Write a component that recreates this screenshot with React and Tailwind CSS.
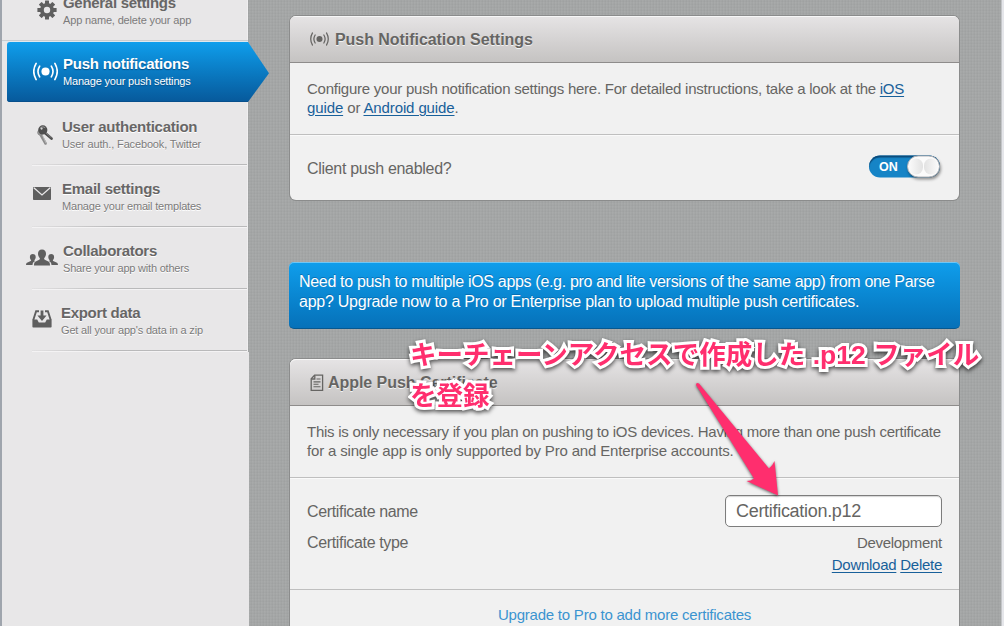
const SANS = "font-['Liberation_Sans',Arial,sans-serif]";

function Broadcast({ className, width, height }) {
  return (
    <svg className={className} width={width} height={height} viewBox="0 0 24 18" fill="none" stroke="currentColor" strokeWidth="1.6" strokeLinecap="round">
      <circle cx="12" cy="9" r="3.9" fill="currentColor" stroke="none" />
      <path d="M6.4 3.8C4.4 7 4.4 11 6.4 14.2M17.6 3.8c2 3.200 2 7.200 0 10.400M3 1.200C.2 6 .2 12 3 16.800M21 1.200c2.800 4.800 2.800 10.800 0 15.600" />
    </svg>
  );
}

function Gear() {
  return (
    <svg width="20" height="20" viewBox="-10 -10 20 20" fill="#5f5f5f">
      {[0, 45, 90, 135].map((a) => (
        <rect key={a} x="-2" y="-9.600" width="4" height="19.200" rx="0.500" transform={`rotate(${a})`} />
      ))}
      <circle r="7" />
      <circle r="3.200" fill="#e8e7e8" />
    </svg>
  );
}

function Keys() {
  return (
    <svg width="18" height="21" viewBox="0 0 18 21">
      <g stroke="#8b8b8b" strokeLinecap="round" fill="none">
        <path d="M3.500 9.500L8.600 18.500" strokeWidth="2.600" />
        <path d="M6 11.500l3 6.500" stroke="#bdbdbd" strokeWidth="0.900" />
        <circle cx="3.300" cy="7.500" r="2.600" fill="#9a9a9a" strokeWidth="1" />
      </g>
      <path d="M7.500 7.500l7 6" stroke="#4c4c4c" strokeWidth="2.700" strokeLinecap="round" />
      <path d="M8 7.200l6.500 5.600" stroke="#969696" strokeWidth="0.700" />
      <circle cx="5.800" cy="4.900" r="4.600" fill="#4f4f4f" />
      <path d="M3.200 3.200c1.200-1.600 3.600-1.800 5-.400" stroke="#aaa" strokeWidth="0.800" fill="none" />
      <circle cx="4.600" cy="3.600" r="1.100" fill="#d5d5d5" />
    </svg>
  );
}

function Mail() {
  return (
    <svg width="18" height="13" viewBox="0 0 18 13">
      <rect width="18" height="13" rx="0.800" fill="#5f5f5f" />
      <path d="M.8.800L9 7.900 17.200.800" fill="none" stroke="#e8e7e8" strokeWidth="1.300" />
    </svg>
  );
}

function People() {
  return (
    <svg width="32" height="17" viewBox="0 0 32 17" fill="#5f5f5f">
      <path d="M16 .5c2.700 0 4 1.800 4 4.200 0 2-.8 3.300-1.700 4.300-.4.800-.1 1.600 1 2.100l3 1.400c1.200.6 1.700 1.600 1.700 4H8c0-2.400.5-3.400 1.700-4l3-1.400c1.100-.5 1.400-1.300 1-2.100C12.800 8 12 6.700 12 4.700 12 2.300 13.300.5 16 .5z" />
      <path d="M6.800 5c1.900 0 2.900 1.200 2.900 3 0 1.400-.6 2.300-1.200 3-.3.600 0 1 .5 1.300-1.600.7-2.300 1.600-2.500 3.700H0c.1-1.700.6-2.200 1.600-2.600l2.600-1.100c.9-.4 1.100-.8.800-1.300-.6-.7-1.100-1.600-1.100-3C3.900 6.200 4.900 5 6.800 5z" />
      <path d="M25.200 5c-1.900 0-2.900 1.200-2.900 3 0 1.400.6 2.300 1.200 3 .3.600 0 1-.5 1.300 1.600.7 2.300 1.600 2.500 3.700H32c-.1-1.700-.6-2.200-1.600-2.600l-2.600-1.100c-.9-.4-1.100-.8-.8-1.300.6-.7 1.100-1.600 1.100-3 0-1.800-1-3-2.900-3z" />
    </svg>
  );
}

function Inbox() {
  return (
    <svg width="20" height="18" viewBox="0 0 20 18">
      <path d="M7 1.200H4.100L1.300 10M13 1.200h2.900L18.700 10" fill="none" stroke="#5f5f5f" strokeWidth="1.900" />
      <path d="M.4 9.600h4.800l1.600 2.800h6.400l1.600-2.800h4.800v7.200a.8.800 0 0 1-.8.800H1.200a.8.800 0 0 1-.8-.8z" fill="#5f5f5f" />
      <path d="M8.600.5h2.800v5h3.200L10 11 5.400 5.500h3.200z" fill="#5f5f5f" />
    </svg>
  );
}

function Doc() {
  return (
    <svg width="14" height="18" viewBox="0 0 14 18" fill="none" stroke="#666563" strokeWidth="1.300">
      <path d="M4.600 1.200H12.600V16.300H1.200V4.700z" />
      <path d="M4.800 1.500V5H1.400" />
      <path d="M6.500 5H10.500M3.500 7.900H10.500M3.500 10.300H8.500M3.500 12.700H10.500" strokeWidth="1.100" />
    </svg>
  );
}

function NavRow({ icon, iconClass, textClass, title, titleClass, sub, subClass }) {
  return (
    <div className="flex h-[62px] shrink-0 flex-col">
      <div className="flex h-[61px]">
        <div className={`flex w-[60px] shrink-0 ${iconClass}`}>{icon}</div>
        <div className={`flex flex-col pt-[15px] whitespace-nowrap [text-shadow:0_1px_0_#fff] ${textClass}`}>
          <span className={`text-[15px] leading-[18px] font-bold text-[#676666] ${titleClass}`}>{title}</span>
          <span className={`text-[11px] leading-4 text-[#7c7b7b] ${subClass}`}>{sub}</span>
        </div>
      </div>
      <div className="mr-px ml-[30px] h-px shrink-0 bg-linear-to-r from-[#e2e1e2] to-[#b9b9ba] to-40% shadow-[0_1px_0_#f4f3f4]" />
    </div>
  );
}

function Sidebar() {
  return (
    <nav className="relative z-10 flex h-[626px] w-[248px] shrink-0 flex-col border-l-2 border-l-[#9fa5ad] bg-[#e8e7e8] shadow-[inset_-1px_0_0_#efeeef]">
      <div className="flex h-[40px] shrink-0">
        <div className="flex w-[60px] shrink-0 pl-[35px]"><Gear /></div>
        <div className="-mt-[6px] flex flex-col pl-[1px] whitespace-nowrap">
          <span className="text-[15px] leading-[18px] font-bold tracking-[-0.300px] text-[#676666]">General settings</span>
          <span className="text-[11px] leading-4 tracking-[-0.160px] text-[#7c7b7b]">App name, delete your app</span>
        </div>
      </div>
      <div className="h-px shrink-0 bg-[#c9cccf]" />
      <div className="h-px shrink-0 bg-[#dfe8ee]" />
      <div className="ml-[5px] flex h-[60px] w-[262px] shrink-0">
        <div className="flex w-[241px] rounded-l-[3px] bg-linear-to-b from-[#0f9eec] to-[#07599b] text-white shadow-[inset_0_-1px_0_#064f8c]">
          <div className="flex w-[56px] pt-[20px] pl-[26px]"><Broadcast width={25} height={19} /></div>
          <div className="flex flex-col pt-[13px] whitespace-nowrap [text-shadow:0_1px_1px_#074f86]">
            <span className="text-[15px] leading-[18px] font-bold tracking-[-0.220px]">Push notifications</span>
            <span className="text-[11px] leading-4 tracking-[-0.180px]">Manage your push settings</span>
          </div>
        </div>
        <div className="w-[21px] bg-linear-to-b from-[#0f9eec] to-[#07599b] [clip-path:polygon(0_0,100%_52%,0_100%)]" />
      </div>
      <div className="h-px shrink-0" />
      <NavRow icon={<Keys />} iconClass="pl-[35px] pt-[22px]" title="User authentication" titleClass="tracking-[-0.250px]" sub="User auth., Facebook, Twitter" subClass="tracking-[-0.150px]" />
      <NavRow icon={<Mail />} iconClass="pl-[31px] pt-[22px]" title="Email settings" titleClass="tracking-[-0.250px]" sub="Manage your email templates" subClass="tracking-[-0.190px]" />
      <NavRow icon={<People />} iconClass="pl-[24px] pt-[22px]" textClass="pl-[1px]" title="Collaborators" titleClass="tracking-[-0.270px]" sub="Share your app with others" subClass="tracking-[-0.210px]" />
      <NavRow icon={<Inbox />} iconClass="pl-[30px] pt-[21px]" textClass="-ml-[1px]" title="Export data" titleClass="tracking-[-0.300px]" sub="Get all your app's data in a zip" subClass="tracking-[-0.180px]" />
      <div className="mt-px w-[247px] grow bg-[#e8e7e8]" />
    </nav>
  );
}

function CardHeader({ icon, title, className }) {
  return (
    <div className={`flex h-[47px] items-center border-b border-[#8e8c8b] bg-linear-to-b from-[#e6e4e5] to-[#c5c3c2] pt-[2px] pl-5 shadow-[inset_0_1px_0_#f7f7f7] ${className}`}>
      {icon}
      <h2 className="text-[16px] leading-5 font-bold tracking-[-0.050px] whitespace-nowrap text-[#666563] [text-shadow:0_1px_0_#f2f2f2]">{title}</h2>
    </div>
  );
}

const LINK = "text-[#18609a] underline underline-offset-2";

export default function App() {
  return (
    <div className={`relative flex h-[626px] w-[1004px] overflow-hidden bg-[#a3a5a5] ${SANS}`}>
      <Sidebar />
      <main className="flex w-[753px] shrink-0 flex-col bg-[#a3a5a5] bg-[repeating-linear-gradient(90deg,#9fa1a199_0_1px,#a8aaaa99_1px_2px,#a4a6a699_2px_3px),repeating-linear-gradient(0deg,#9fa1a1_0_1px,#a5a7a7_1px_2px,#a9abab_2px_3px)] pt-4 pl-[42px]">
        <section className="h-[184px] w-[669px] shrink-0 overflow-hidden rounded-md bg-[#f1f1f1] shadow-[0_0_0_1px_#8b8c8c]">
          <CardHeader title="Push Notification Settings" icon={<Broadcast className="mr-[6px] -mt-[3px] text-[#666563]" width={19} height={14} />} />
          <div className="h-[72px] border-b border-[#bfbfbf] px-[17px] pt-[16px] text-[15px] leading-[19px] whitespace-nowrap text-[#666563]">
            <p className="tracking-[-0.240px]">Configure your push notification settings here. For detailed instructions, take a look at the <a className={LINK}>iOS</a></p>
            <p className="tracking-[-0.120px]"><a className={LINK}>guide</a> or <a className={LINK}>Android guide</a>.</p>
          </div>
          <div className="flex h-[65px] items-center justify-between pr-[19px] pl-[17px] shadow-[inset_0_1px_0_#fafafa]">
            <span className="mt-[2px] text-[16px] tracking-[-0.300px] text-[#666563]">Client push enabled?</span>
            <div className="flex h-[22px] w-[71px] -translate-y-[1.500px] items-center justify-between rounded-full bg-[#1684c6] pl-[10px] shadow-[inset_0_2px_1px_#0b4a7a]">
              <span className="mt-px text-[12.500px] font-bold text-white">ON</span>
              <div className="flex h-[22px] w-[33px] shrink-0 items-center justify-center gap-px rounded-full border border-[#b5b5b9] bg-[#fbfbfb] shadow-[1px_2px_3px_#00000066]">
                <span className="h-[16px] w-[14px] rounded-full bg-linear-to-r from-[#fafafa] to-[#e2e2e2]" />
                <span className="h-[16px] w-[14px] rounded-full bg-linear-to-l from-[#fafafa] to-[#e2e2e2]" />
              </div>
            </div>
          </div>
        </section>
        <section className="mt-[62px] -ml-px h-[67px] w-[671px] shrink-0 rounded-[5px] border-b border-[#07588f] bg-linear-to-b from-[#0f9eec] to-[#0671b9] px-[10px] pt-[10px] text-[16px] leading-5 whitespace-nowrap text-white shadow-[inset_0_1px_0_#6fc6f5] [text-shadow:0_-1px_0_#0870b4]">
          <p className="tracking-[-0.320px]">Need to push to multiple iOS apps (e.g. pro and lite versions of the same app) from one Parse</p>
          <p className="tracking-[-0.250px]">app? Upgrade now to a Pro or Enterprise plan to upload multiple push certificates.</p>
        </section>
        <section className="mt-[30px] h-[267px] w-[669px] shrink-0 rounded-t-md bg-[#f1f1f1] shadow-[0_0_0_1px_#8b8c8c]">
          <CardHeader className="rounded-t-md" title="Apple Push Certificate" icon={<span className="mr-[4px]"><Doc /></span>} />
          <div className="h-[72px] border-b border-[#bfbfbf] px-[17px] pt-[16px] text-[15px] leading-[19px] whitespace-nowrap text-[#666563]">
            <p className="tracking-[-0.260px]">This is only necessary if you plan on pushing to iOS devices. Having more than one push certificate</p>
            <p className="tracking-[-0.170px]">for a single app is only supported by Pro and Enterprise accounts.</p>
          </div>
          <div className="flex h-[112px] justify-between border-b border-[#bfbfbf] px-[17px] text-[#666563] shadow-[inset_0_1px_0_#fafafa]">
            <div className="flex flex-col pt-[18px] text-[16px] leading-[31px] tracking-[-0.350px]">
              <span>Certificate name</span>
              <span>Certificate type</span>
            </div>
            <div className="flex flex-col items-end pt-[17px]">
              <div className="flex h-8 w-[217px] items-center rounded-[5px] border border-[#7d7d7d] bg-white pl-[10px] text-[18px] tracking-[-0.300px] shadow-[inset_0_1px_1px_#d5d5d5]">Certification.p12</div>
              <span className="mt-[5px] text-[15px] leading-[22px] tracking-[-0.300px]">Development</span>
              <span className="text-[15px] leading-[22px] tracking-[-0.270px]"><a className={LINK}>Download</a> <a className={LINK}>Delete</a></span>
            </div>
          </div>
          <div className="pt-[15px] text-center text-[15px] leading-5 tracking-[-0.220px] text-[#3b94d0]">Upgrade to Pro to add more certificates</div>
        </section>
      </main>
      <div className="grow border-l border-[#c3c5c8] bg-[#e5e6ea]" />
      <svg className="absolute top-[370px] left-[680px] z-20 drop-shadow-[0_1px_1.500px_#00000099]" width="120" height="140" viewBox="680 370 120 140">
        <path d="M699 383.500L769 468.500Q773 465 774.500 461L778 495.500L746.500 481Q751 481 754 478.500L696 385Q696 382 699 383.500Z" fill="#ff2e6e" />
      </svg>
      <div className="absolute top-[335px] left-[410px] z-20 font-['Liberation_Sans','Noto_Sans_CJK_JP',sans-serif] text-[26.500px] leading-[41px] font-bold tracking-[0.030px] whitespace-nowrap text-[#ff2e6e] [-webkit-text-stroke:6px_#fff] [filter:drop-shadow(0_2px_2px_#000000aa)] [paint-order:stroke_fill] [stroke-linejoin:round]" lang="ja">
        <p>キーチェーンアクセスで作成した .p12 ファイル</p>
        <p>を登録</p>
      </div>
    </div>
  );
}
